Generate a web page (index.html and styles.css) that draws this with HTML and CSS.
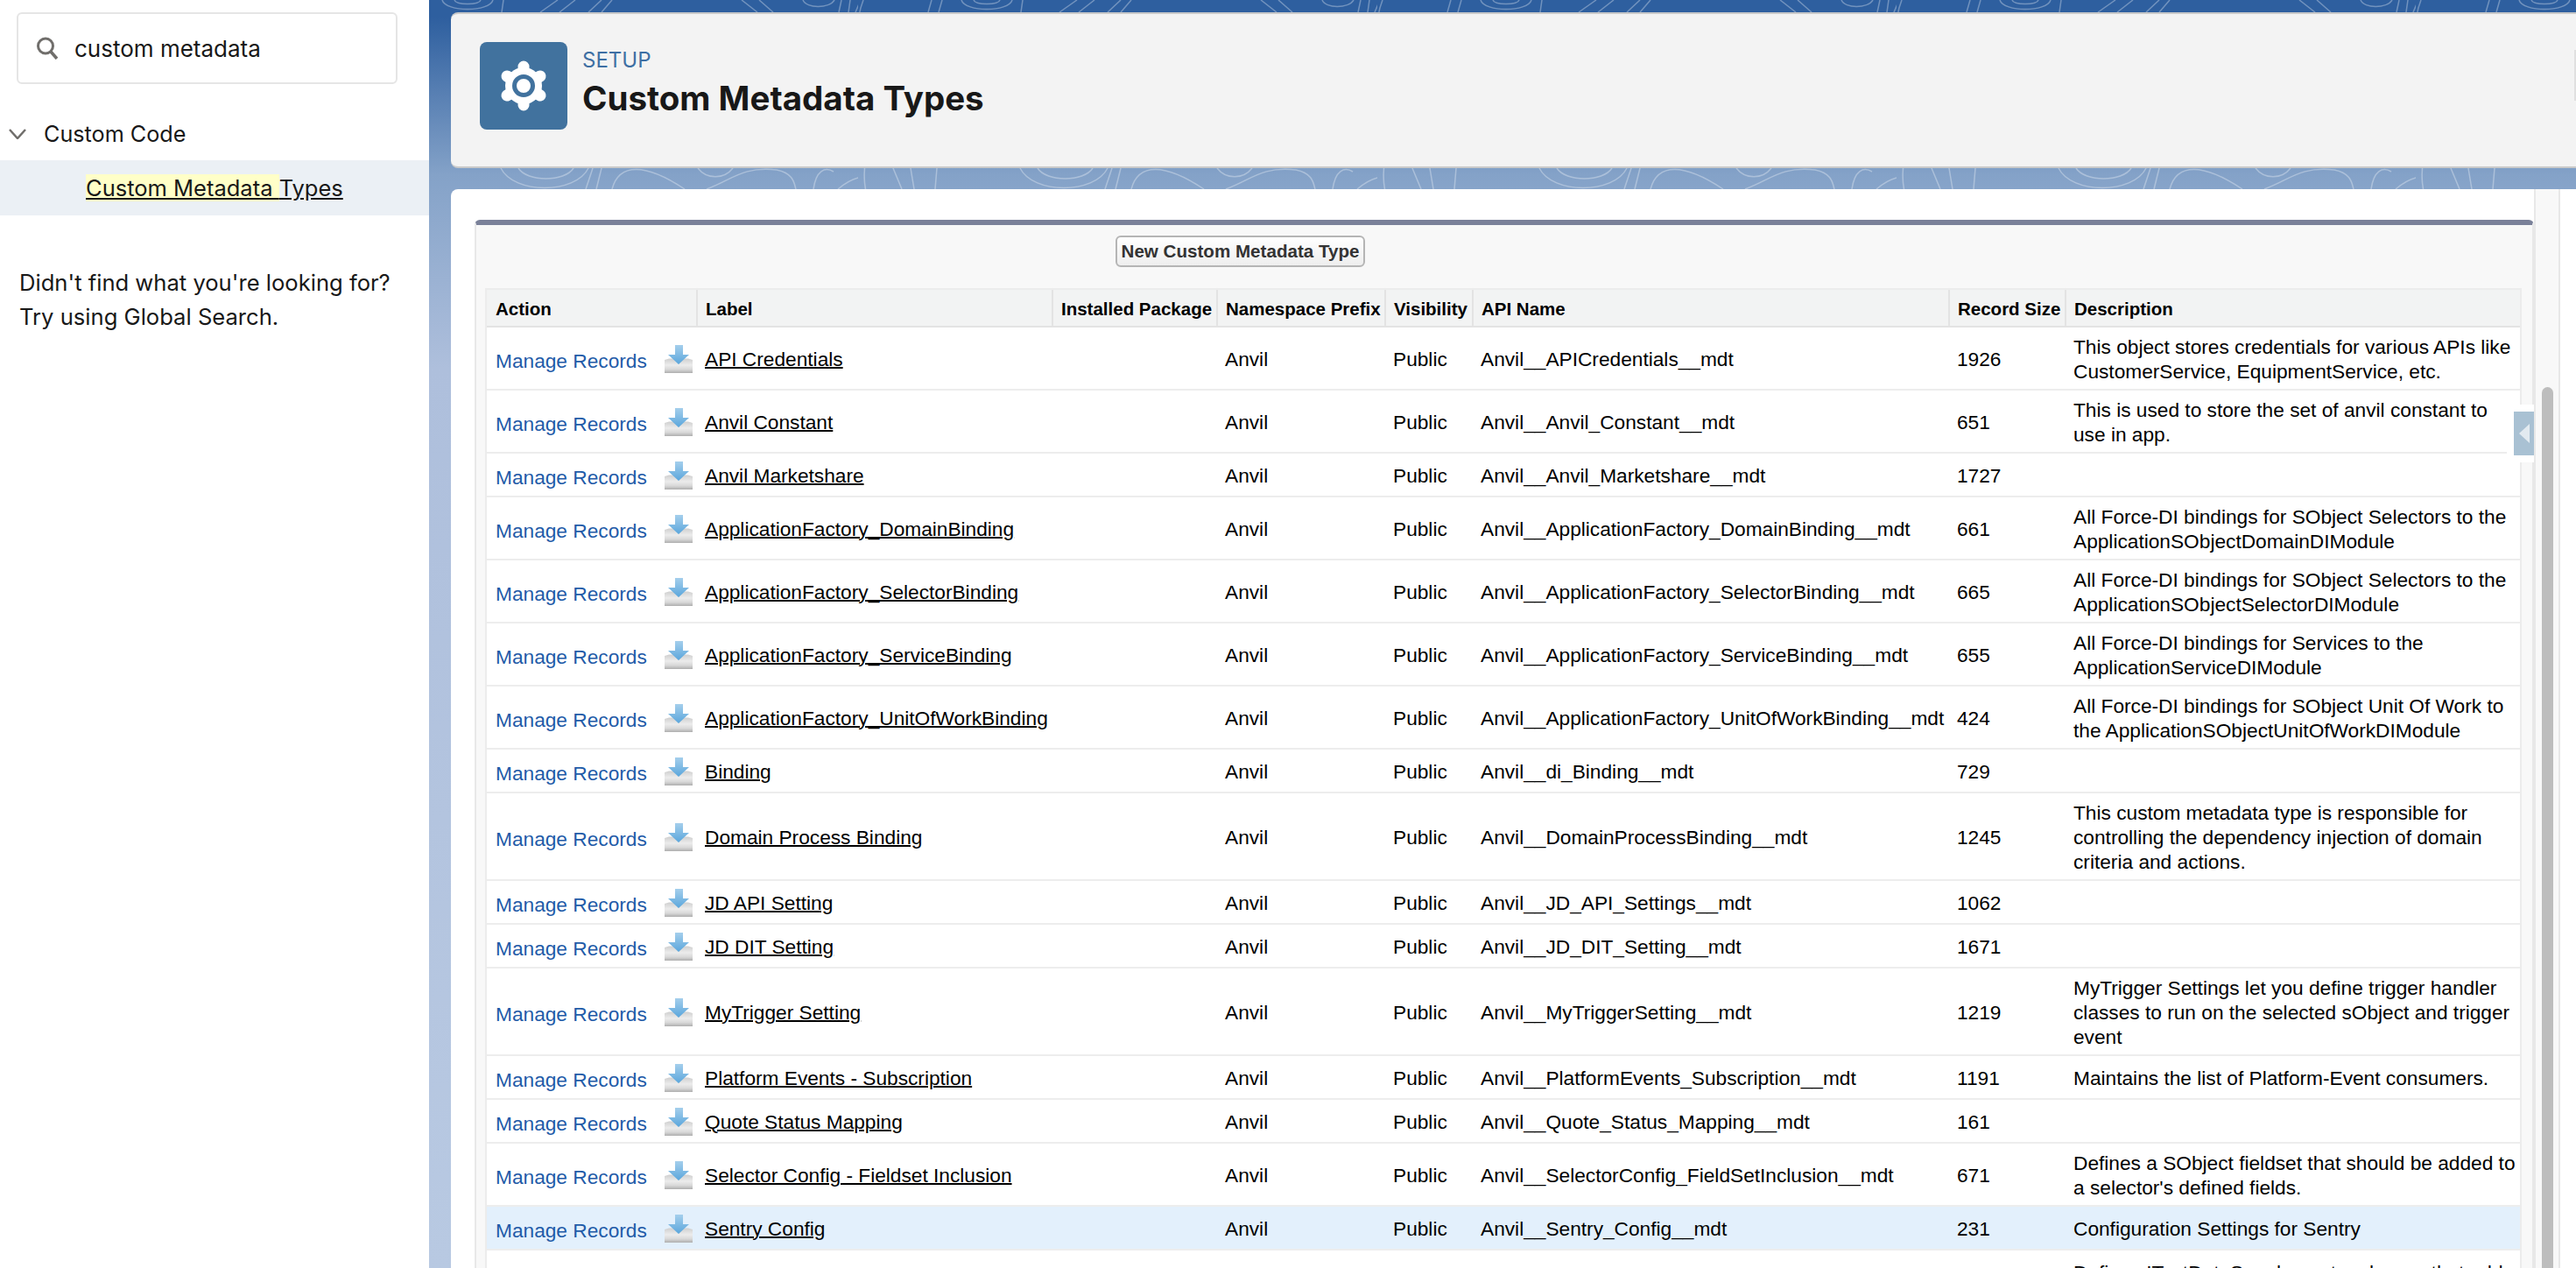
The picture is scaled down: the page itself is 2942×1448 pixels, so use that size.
FILE: index.html

```html
<!DOCTYPE html>
<html lang="en">
<head>
    <meta charset="UTF-8">
    <title>Custom Metadata Types</title>
    <link rel="stylesheet" href="styles.css">
</head>
<body>
<svg width="0" height="0" class="defs">
    <symbol id="dl" viewBox="0 0 32 32">
        <defs>
            <linearGradient id="tray" x1="0" y1="0" x2="0" y2="1">
                <stop offset="0" stop-color="#cfcfcf"/>
                <stop offset="0.45" stop-color="#ececec"/>
                <stop offset="0.75" stop-color="#d8d8d8"/>
                <stop offset="1" stop-color="#aeaeae"/>
            </linearGradient>
            <linearGradient id="arrow" x1="0" y1="0" x2="0" y2="1">
                <stop offset="0" stop-color="#a5cfec"/>
                <stop offset="1" stop-color="#5aa6dc"/>
            </linearGradient>
        </defs>
        <path d="M0 17l5-1.500h22l5 1.500v15H0z" fill="url(#tray)"/>
        <path d="M12 0h9v11h7L16 22 4 11h8z" fill="url(#arrow)"/>
    </symbol>
</svg>

<div class="sidebar">
    <div class="search">
        <svg class="search-icon" width="26" height="26" viewBox="0 0 26 26">
            <circle cx="11" cy="10.500" r="8.500" fill="none" stroke="#706e6b" stroke-width="3"/>
            <path d="M17 17l7 8" stroke="#706e6b" stroke-width="3.500" fill="none"/>
        </svg>
        <span>custom metadata</span>
    </div>
    <div class="tree-head">
        <svg width="20" height="12" viewBox="0 0 20 12"><path d="M1 1l9 10 9-10" fill="none" stroke="#706e6b" stroke-width="2.500"/></svg>
        <span>Custom Code</span>
    </div>
    <div class="tree-item"><a href="#"><mark>Custom Metadata </mark>Types</a></div>
    <p class="not-found">Didn't find what you're looking for?<br>Try using Global Search.</p>
</div>

<div class="main">
    <!-- background contours, one tile repeated -->
    <svg class="contours" width="100%" height="100%">
        <defs>
            <pattern id="topo" width="593" height="1448" patternUnits="userSpaceOnUse" x="490">
                <g fill="none" stroke="#fff" stroke-width="1.500" opacity="0.32">
                    <path d="M118 0C122 14 172 14 176 0M132 0C134 6 160 6 162 0M96 0L92 14M84 0L80 14M188 0L186 14M250 0L230 14M270 0L252 14M300 0L285 14M312 0L300 14M460 0L478 14M480 0L496 14M530 0C534 10 560 10 566 0M574 0L571 14M584 0L582 14M596 0L590 14"/>
                    <path d="M185 192C200 222 270 222 285 192M205 192C215 208 258 208 268 192M40 192L50 216M60 192L64 216M90 192L88 216M290 192L282 216M300 192L294 216M312 216C320 186 350 186 395 216M410 192C420 205 440 205 450 192M420 216C450 205 460 190 500 194C520 198 520 210 522 216M542 216C545 195 555 190 565 196M570 216C600 190 620 205 645 216"/>
                    <path d="M6 0C-10 40 6 90 22 130M18 150C0 190 6 230 24 260M4 216C14 240 0 270 12 300M22 330C2 370 4 420 20 470M8 500C22 540 2 590 14 640M24 700C6 750 8 800 20 860"/>
                </g>
            </pattern>
        </defs>
        <rect width="100%" height="100%" fill="url(#topo)"/>
    </svg>

    <div class="page-head">
        <div class="head-icon">
            <svg width="100" height="100" viewBox="0 0 100 100">
                <g stroke="#fff" stroke-width="13" stroke-linecap="round">
                    <path d="M50 50V28M50 50V72M50 50L69 39M50 50L31 61M50 50L69 61M50 50L31 39"/>
                </g>
                <circle cx="50" cy="50" r="21" fill="#fff"/>
                <circle cx="50" cy="50" r="10.500" fill="#fff" stroke="#41729e" stroke-width="5"/>
            </svg>
        </div>
        <div>
            <div class="eyebrow">SETUP</div>
            <h1>Custom Metadata Types</h1>
        </div>
        <div class="head-edge"></div>
    </div>

    <div class="card">
        <div class="card-body">
            <div class="block">
                <div class="buttons"><button>New Custom Metadata Type</button></div>
                <table>
                    <colgroup>
                        <col class="c-action"><col class="c-label"><col class="c-pkg"><col class="c-ns">
                        <col class="c-vis"><col class="c-api"><col class="c-size"><col class="c-desc">
                    </colgroup>
                    <tr>
                        <th>Action</th><th>Label</th><th>Installed Package</th><th>Namespace Prefix</th>
                        <th>Visibility</th><th>API Name</th><th>Record Size</th><th>Description</th>
                    </tr>
                    <tr>
                        <td><div class="act"><a href="#">Manage Records</a><svg width="32" height="32"><use href="#dl"/></svg></div></td>
                        <td><a class="lbl" href="#">API Credentials</a></td><td></td><td>Anvil</td><td>Public</td>
                        <td>Anvil__APICredentials__mdt</td><td>1926</td>
                        <td>This object stores credentials for various APIs like CustomerService, EquipmentService, etc.</td>
                    </tr>
                    <tr>
                        <td><div class="act"><a href="#">Manage Records</a><svg width="32" height="32"><use href="#dl"/></svg></div></td>
                        <td><a class="lbl" href="#">Anvil Constant</a></td><td></td><td>Anvil</td><td>Public</td>
                        <td>Anvil__Anvil_Constant__mdt</td><td>651</td>
                        <td>This is used to store the set of anvil constant to use in app.</td>
                    </tr>
                    <tr>
                        <td><div class="act"><a href="#">Manage Records</a><svg width="32" height="32"><use href="#dl"/></svg></div></td>
                        <td><a class="lbl" href="#">Anvil Marketshare</a></td><td></td><td>Anvil</td><td>Public</td>
                        <td>Anvil__Anvil_Marketshare__mdt</td><td>1727</td>
                        <td></td>
                    </tr>
                    <tr>
                        <td><div class="act"><a href="#">Manage Records</a><svg width="32" height="32"><use href="#dl"/></svg></div></td>
                        <td><a class="lbl" href="#">ApplicationFactory_DomainBinding</a></td><td></td><td>Anvil</td><td>Public</td>
                        <td>Anvil__ApplicationFactory_DomainBinding__mdt</td><td>661</td>
                        <td>All Force-DI bindings for SObject Selectors to the ApplicationSObjectDomainDIModule</td>
                    </tr>
                    <tr>
                        <td><div class="act"><a href="#">Manage Records</a><svg width="32" height="32"><use href="#dl"/></svg></div></td>
                        <td><a class="lbl" href="#">ApplicationFactory_SelectorBinding</a></td><td></td><td>Anvil</td><td>Public</td>
                        <td>Anvil__ApplicationFactory_SelectorBinding__mdt</td><td>665</td>
                        <td>All Force-DI bindings for SObject Selectors to the ApplicationSObjectSelectorDIModule</td>
                    </tr>
                    <tr>
                        <td><div class="act"><a href="#">Manage Records</a><svg width="32" height="32"><use href="#dl"/></svg></div></td>
                        <td><a class="lbl" href="#">ApplicationFactory_ServiceBinding</a></td><td></td><td>Anvil</td><td>Public</td>
                        <td>Anvil__ApplicationFactory_ServiceBinding__mdt</td><td>655</td>
                        <td>All Force-DI bindings for Services to the ApplicationServiceDIModule</td>
                    </tr>
                    <tr>
                        <td><div class="act"><a href="#">Manage Records</a><svg width="32" height="32"><use href="#dl"/></svg></div></td>
                        <td><a class="lbl" href="#">ApplicationFactory_UnitOfWorkBinding</a></td><td></td><td>Anvil</td><td>Public</td>
                        <td>Anvil__ApplicationFactory_UnitOfWorkBinding__mdt</td><td>424</td>
                        <td>All Force-DI bindings for SObject Unit Of Work to the ApplicationSObjectUnitOfWorkDIModule</td>
                    </tr>
                    <tr>
                        <td><div class="act"><a href="#">Manage Records</a><svg width="32" height="32"><use href="#dl"/></svg></div></td>
                        <td><a class="lbl" href="#">Binding</a></td><td></td><td>Anvil</td><td>Public</td>
                        <td>Anvil__di_Binding__mdt</td><td>729</td>
                        <td></td>
                    </tr>
                    <tr>
                        <td><div class="act"><a href="#">Manage Records</a><svg width="32" height="32"><use href="#dl"/></svg></div></td>
                        <td><a class="lbl" href="#">Domain Process Binding</a></td><td></td><td>Anvil</td><td>Public</td>
                        <td>Anvil__DomainProcessBinding__mdt</td><td>1245</td>
                        <td>This custom metadata type is responsible for controlling the dependency injection of domain criteria and actions.</td>
                    </tr>
                    <tr>
                        <td><div class="act"><a href="#">Manage Records</a><svg width="32" height="32"><use href="#dl"/></svg></div></td>
                        <td><a class="lbl" href="#">JD API Setting</a></td><td></td><td>Anvil</td><td>Public</td>
                        <td>Anvil__JD_API_Settings__mdt</td><td>1062</td>
                        <td></td>
                    </tr>
                    <tr>
                        <td><div class="act"><a href="#">Manage Records</a><svg width="32" height="32"><use href="#dl"/></svg></div></td>
                        <td><a class="lbl" href="#">JD DIT Setting</a></td><td></td><td>Anvil</td><td>Public</td>
                        <td>Anvil__JD_DIT_Setting__mdt</td><td>1671</td>
                        <td></td>
                    </tr>
                    <tr>
                        <td><div class="act"><a href="#">Manage Records</a><svg width="32" height="32"><use href="#dl"/></svg></div></td>
                        <td><a class="lbl" href="#">MyTrigger Setting</a></td><td></td><td>Anvil</td><td>Public</td>
                        <td>Anvil__MyTriggerSetting__mdt</td><td>1219</td>
                        <td>MyTrigger Settings let you define trigger handler classes to run on the selected sObject and trigger event</td>
                    </tr>
                    <tr>
                        <td><div class="act"><a href="#">Manage Records</a><svg width="32" height="32"><use href="#dl"/></svg></div></td>
                        <td><a class="lbl" href="#">Platform Events - Subscription</a></td><td></td><td>Anvil</td><td>Public</td>
                        <td>Anvil__PlatformEvents_Subscription__mdt</td><td>1191</td>
                        <td>Maintains the list of Platform-Event consumers.</td>
                    </tr>
                    <tr>
                        <td><div class="act"><a href="#">Manage Records</a><svg width="32" height="32"><use href="#dl"/></svg></div></td>
                        <td><a class="lbl" href="#">Quote Status Mapping</a></td><td></td><td>Anvil</td><td>Public</td>
                        <td>Anvil__Quote_Status_Mapping__mdt</td><td>161</td>
                        <td></td>
                    </tr>
                    <tr>
                        <td><div class="act"><a href="#">Manage Records</a><svg width="32" height="32"><use href="#dl"/></svg></div></td>
                        <td><a class="lbl" href="#">Selector Config - Fieldset Inclusion</a></td><td></td><td>Anvil</td><td>Public</td>
                        <td>Anvil__SelectorConfig_FieldSetInclusion__mdt</td><td>671</td>
                        <td>Defines a SObject fieldset that should be added to a selector's defined fields.</td>
                    </tr>
                    <tr class="hover">
                        <td><div class="act"><a href="#">Manage Records</a><svg width="32" height="32"><use href="#dl"/></svg></div></td>
                        <td><a class="lbl" href="#">Sentry Config</a></td><td></td><td>Anvil</td><td>Public</td>
                        <td>Anvil__Sentry_Config__mdt</td><td>231</td>
                        <td>Configuration Settings for Sentry</td>
                    </tr>
                    <tr>
                        <td></td><td></td><td></td><td></td><td></td><td></td><td></td>
                        <td>Defines ITestDataSupplementer classes that add</td>
                    </tr>
                </table>
            </div>
            <div class="peek"><div class="peek-btn"><i></i></div></div>
        </div>
        <div class="track"><div class="thumb"></div></div>
    </div>
</div>
</body>
</html>
```

FILE: styles.css

```css
* {
    box-sizing: border-box;
}

html, body {
    margin: 0;
    height: 100%;
    overflow: hidden;
}

body {
    display: flex;
    background: #fff;
    color: #181818;
    font-family: Inter, "Liberation Sans", sans-serif;
}

.defs {
    position: absolute;
}

/* left column */
.sidebar {
    width: 490px;
    flex: none;
    background: #fff;
}

.search {
    display: flex;
    align-items: center;
    gap: 18px;
    width: 435px;
    height: 82px;
    margin: 14px 0 0 19px;
    padding: 0 0 0 20px;
    border: 2px solid #e5e5e5;
    border-radius: 6px;
    font-size: 26px;
}

.tree-head {
    display: flex;
    align-items: center;
    gap: 20px;
    height: 50px;
    margin-top: 32px;
    padding-left: 10px;
    font-size: 25.200px;
}

.tree-item {
    height: 63px;
    margin-top: 5px;
    padding: 17px 0 0 98px;
    background: #ebf0f5;
    font-size: 25.500px;
    line-height: 30px;
}

.tree-item a {
    color: #181818;
}

.tree-item mark {
    background: #ffffc8;
    color: inherit;
}

.not-found {
    margin: 57px 0 0 22px;
    font-size: 25.600px;
    line-height: 39px;
}

/* right column */
.main {
    position: relative;
    flex: 1;
    min-width: 0;
    height: 1448px;
    display: flex;
    flex-direction: column;
    padding: 14px 0 0 25px;
    background: linear-gradient(#2e5f9f 0, #2e5f9f 20px, #84a2c8 200px, #aebfdc 420px, #b8c9e2 1448px);
    overflow: hidden;
}

.contours {
    position: absolute;
    left: 0;
    top: 0;
}

.page-head {
    position: relative;
    display: flex;
    align-items: flex-start;
    gap: 17px;
    height: 178px;
    padding: 32px 0 0 33px;
    background: #f3f3f3;
    border-top: 2px solid #c9c9c9;
    border-bottom: 2px solid #c9c9c9;
    border-top-left-radius: 8px;
    border-bottom-left-radius: 8px;
}

.head-icon {
    width: 100px;
    height: 100px;
    border-radius: 8px;
    background: #41729e;
}

.head-icon svg {
    display: block;
}

.eyebrow {
    margin-top: 6px;
    font-size: 24px;
    line-height: 30px;
    color: #3e6fa3;
}

h1 {
    margin: 4px 0 0;
    font-size: 38.500px;
    line-height: 48px;
    font-weight: 700;
    color: #181818;
}

.head-edge {
    position: absolute;
    right: 0;
    top: 41px;
    width: 2px;
    height: 58px;
    background: #e0e0e0;
}

.card {
    position: relative;
    flex: 1;
    min-height: 0;
    display: flex;
    margin-top: 24px;
    padding-right: 18px;
    background: #fff;
    border-top-left-radius: 8px;
}

.card-body {
    position: relative;
    flex: 1;
    min-width: 0;
    padding: 35px 0 0 27px;
}

.block {
    height: 100%;
    padding: 0 12px 0 10px;
    background: #f8f8f8;
    border: 2px solid #e8e8e8;
    border-top: 6px solid #7a8199;
    border-bottom: 0;
    border-radius: 6px 6px 0 0;
}

.buttons {
    height: 72px;
    padding: 12px 0 0 720px;
}

button {
    display: block;
    width: 285px;
    height: 36px;
    padding: 0;
    background: linear-gradient(#fff, #eee);
    border: 2px solid #b5b5b5;
    border-radius: 6px;
    font-family: "Liberation Sans", sans-serif;
    font-size: 20.600px;
    font-weight: 700;
    color: #333;
}

.track {
    width: 30px;
    flex: none;
    padding: 226px 6px 0 7px;
    background: #f8f8f8;
    border-left: 2px solid #e8e8e8;
    border-right: 2px solid #e8e8e8;
}

.thumb {
    height: 100%;
    background: #bdbdbd;
    border-radius: 8px 8px 0 0;
}

/* table */
table {
    width: 2326px;
    table-layout: fixed;
    border-collapse: separate;
    border-spacing: 0;
    background: #fff;
    border: 2px solid #ececec;
    border-bottom: 0;
    font-family: "Liberation Sans", sans-serif;
    font-size: 22.700px;
    line-height: 28px;
    color: #000;
}

.c-action { width: 239px; }
.c-label { width: 406px; }
.c-pkg { width: 188px; }
.c-ns { width: 192px; }
.c-vis { width: 100px; }
.c-api { width: 544px; }
.c-size { width: 133px; }
.c-desc { width: 520px; }

tr {
    height: 50px;
}

tr:first-child {
    height: 43px;
}

th {
    padding: 2px 0 0 9px;
    background: #f2f3f3;
    border-bottom: 2px solid #e3e3e3;
    border-left: 2px solid #e3e3e3;
    font-size: 20.500px;
    text-align: left;
    white-space: nowrap;
}

th:first-child {
    padding-left: 10px;
    border-left: 0;
}

td {
    padding: 8px 2px 6px 10px;
    border-bottom: 2px solid #ededed;
    vertical-align: middle;
}

tr.hover td {
    background: #e3f0fc;
}

.act {
    display: flex;
    align-items: center;
    gap: 20px;
}

.act a {
    padding-top: 4px;
    color: #1f5ba8;
    text-decoration: none;
    white-space: nowrap;
}

.act svg {
    display: block;
    flex: none;
}

.lbl {
    color: #000;
    text-decoration-thickness: 2px;
    white-space: nowrap;
}

/* sidebar toggle over the table's right edge */
.peek {
    position: absolute;
    right: 0;
    top: 246px;
    width: 31px;
    height: 66px;
    padding: 8px 0 8px 8px;
    background: #fff;
    border-radius: 10px 0 0 10px;
}

.peek-btn {
    display: flex;
    align-items: center;
    justify-content: center;
    height: 100%;
    background: #a9c1d3;
}

.peek-btn i {
    border-style: solid;
    border-width: 11px 12px 11px 0;
    border-color: transparent #e2eaf0 transparent transparent;
}
```
